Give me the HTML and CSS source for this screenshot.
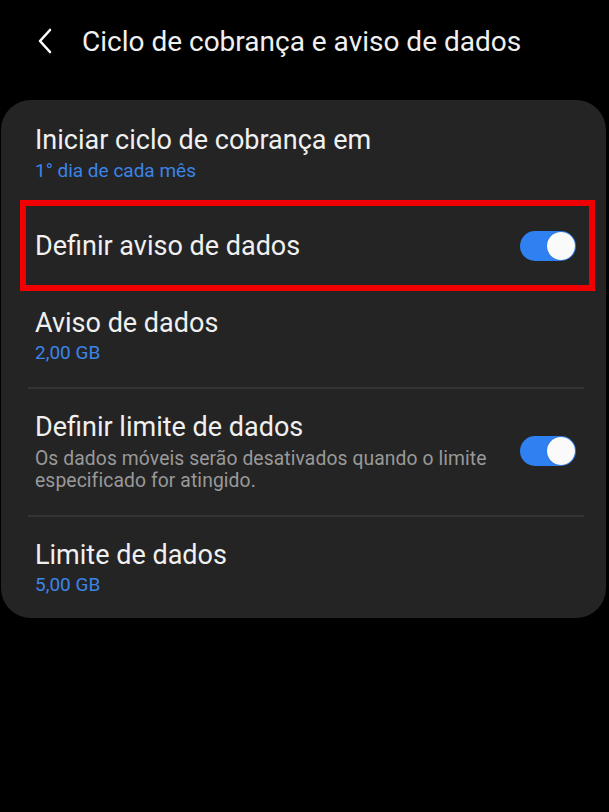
FILE: index.html
```html
<!DOCTYPE html>
<html lang="pt">
<head>
<meta charset="utf-8">
<link rel="stylesheet" href="styles.css">
</head>
<body>
<header class="topbar">
  <svg class="back" width="16" height="26" viewBox="0 0 16 26"><path d="M13 2 L3 13 L13 24" fill="none" stroke="#fff" stroke-width="2.6" stroke-linecap="round" stroke-linejoin="round"/></svg>
  <h1 class="title">Ciclo de cobrança e aviso de dados</h1>
</header>
<main class="card">
  <div class="row row-first">
    <div class="texts">
      <div class="label">Iniciar ciclo de cobrança em</div>
      <div class="value">1° dia de cada mês</div>
    </div>
  </div>
  <div class="row row-highlight">
    <div class="texts">
      <div class="label">Definir aviso de dados</div>
    </div>
    <span class="toggle"><span class="knob"></span></span>
  </div>
  <div class="row row-plain">
    <div class="texts">
      <div class="label">Aviso de dados</div>
      <div class="value">2,00 GB</div>
    </div>
  </div>
  <div class="divider"></div>
  <div class="row row-limit">
    <div class="texts">
      <div class="label">Definir limite de dados</div>
      <div class="desc">Os dados móveis serão desativados quando o limite especificado for atingido.</div>
    </div>
    <span class="toggle toggle-top"><span class="knob"></span></span>
  </div>
  <div class="divider"></div>
  <div class="row row-last">
    <div class="texts">
      <div class="label">Limite de dados</div>
      <div class="value">5,00 GB</div>
    </div>
  </div>
</main>
</body>
</html>
```
FILE: styles.css
```css
html, body {
  margin: 0;
  padding: 0;
  background: #000;
  width: 609px;
  height: 812px;
  overflow: hidden;
  font-family: Roboto, "Liberation Sans", sans-serif;
  color: #f0f0f0;
}
.topbar {
  height: 100px;
  display: flex;
  align-items: center;
  padding-left: 37px;
  box-sizing: border-box;
  padding-bottom: 18px;
}
.back {
  display: block;
  margin-right: 29px;
}
.title {
  margin: 0;
  font-size: 28px;
  font-weight: 400;
  color: #f0f0f0;
}
.card {
  margin: 0 3px 0 1px;
  background: #242424;
  border-radius: 30px;
  display: flex;
  flex-direction: column;
  height: 518px;
  box-sizing: border-box;
}
.row {
  display: flex;
  align-items: flex-start;
  padding-left: 34px;
  padding-right: 30px;
  box-sizing: border-box;
}
.texts {
  flex: 1;
  min-width: 0;
}
.label {
  font-size: 27px;
  line-height: 32px;
  color: #f0f0f0;
}
.value {
  font-size: 19px;
  line-height: 24px;
  color: #3b84e8;
  margin-top: 2px;
}
.desc {
  font-size: 19.3px;
  line-height: 22px;
  letter-spacing: 0.1px;
  color: #999;
  margin-top: 5px;
  max-width: 470px;
}
.row-first {
  height: 100px;
  padding-top: 24px;
}
.row-first .value {
  margin-top: 3px;
}
.row-highlight {
  height: 91px;
  align-items: center;
  margin: 0 11px 0 19px;
  border: 6px solid #f00000;
  padding-left: 9px;
  padding-right: 13px;
}
.row-plain {
  height: 96px;
  padding-top: 16px;
}
.row-limit {
  height: 126px;
  padding-top: 22px;
}
.row-last {
  flex: 1;
  padding-top: 22px;
}
.divider {
  height: 2px;
  background: #333;
  margin: 0 22px 0 27px;
}
.toggle {
  width: 56px;
  height: 30px;
  border-radius: 15px;
  background: #2f80f0;
  position: relative;
  flex: none;
}
.toggle-top {
  margin-top: 25px;
}
.knob {
  position: absolute;
  right: 1px;
  top: 1px;
  width: 28px;
  height: 28px;
  border-radius: 50%;
  background: #fafafa;
  box-shadow: 0 0 1px #1a4fa0;
}
```
